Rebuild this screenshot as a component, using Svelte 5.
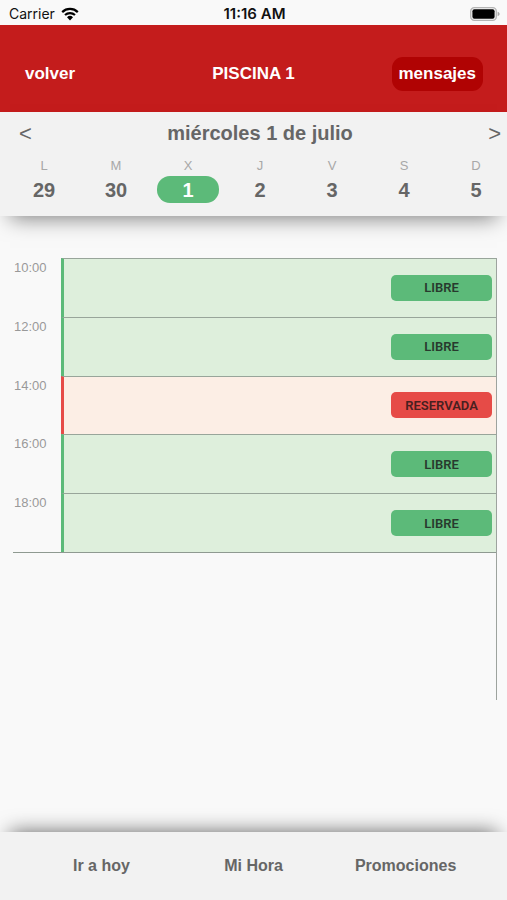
<script lang="ts">
  type Day = { letter: string; name: string; number: number };
  type Slot = { time: string; reserved: boolean };

  const days: Day[] = [
    { letter: "L", name: "lunes", number: 29 },
    { letter: "M", name: "martes", number: 30 },
    { letter: "X", name: "miércoles", number: 1 },
    { letter: "J", name: "jueves", number: 2 },
    { letter: "V", name: "viernes", number: 3 },
    { letter: "S", name: "sábado", number: 4 },
    { letter: "D", name: "domingo", number: 5 },
  ];

  const slots: Slot[] = [
    { time: "10:00", reserved: false },
    { time: "12:00", reserved: false },
    { time: "14:00", reserved: true },
    { time: "16:00", reserved: false },
    { time: "18:00", reserved: false },
  ];

  let selected = $state(1);
</script>

<div class="screen">
  <div class="status">
    <div class="carrier">
      Carrier
      <svg width="18" height="14" viewBox="0 0 18 14" aria-hidden="true">
        <path d="M1.2 5.1a11.2 11.2 0 0 1 15.6 0" fill="none" stroke="#000" stroke-width="2.2" />
        <path d="M4 8.1a7.2 7.2 0 0 1 10 0" fill="none" stroke="#000" stroke-width="2.1" />
        <path d="M9 13.4 6 10.3a4.3 4.3 0 0 1 6 0z" fill="#000" />
      </svg>
    </div>
    <div class="clock">11:16 AM</div>
    <svg class="battery" width="30" height="14" viewBox="0 0 30 14" aria-hidden="true">
      <rect x="0.7" y="0.7" width="25.6" height="12.6" rx="3.6" fill="#f4f4f4" stroke="#b4b4b4" stroke-width="1.3" />
      <rect x="2.4" y="2.3" width="22.2" height="9.4" rx="2" fill="#000" />
      <path d="M27.6 4.8c1.2.4 2 1.2 2 2.2s-.8 1.8-2 2.2z" fill="#a9a9a9" />
    </svg>
  </div>

  <header class="topbar">
    <div><button class="back" type="button">volver</button></div>
    <h1>PISCINA 1</h1>
    <div class="end"><button class="messages" type="button">mensajes</button></div>
  </header>

  <section class="calendar">
    <div class="date-row">
      <button type="button" aria-label="Semana anterior">&lt;</button>
      <h2>miércoles 1 de julio</h2>
      <button type="button" aria-label="Semana siguiente">&gt;</button>
    </div>
    <div class="days">
      {#each days as day}
        <button class="day" class:active={day.number === selected} type="button" aria-label="{day.name} {day.number}" aria-pressed={day.number === selected} onclick={() => (selected = day.number)}>
          <span class="letter">{day.letter}</span>
          <span class="number">{day.number}</span>
        </button>
      {/each}
    </div>
  </section>

  <main>
    <div class="agenda">
      <table>
        <tbody>
          {#each slots as slot}
            <tr class:reserved={slot.reserved}>
              <th scope="row">{slot.time}</th>
              <td><button type="button">{slot.reserved ? "RESERVADA" : "LIBRE"}</button></td>
            </tr>
          {/each}
        </tbody>
      </table>
    </div>
  </main>

  <nav class="tabs">
    <button type="button">Ir a hoy</button>
    <button type="button">Mi Hora</button>
    <button type="button">Promociones</button>
  </nav>
</div>

<style>
  :global(*) { box-sizing: border-box; }
  :global(body) { margin: 0; background: #f9f9f9; font-family: "Liberation Sans", Arial, sans-serif; }
  button { border: 0; padding: 0; color: inherit; background: none; font: inherit; cursor: pointer; }

  .screen { display: flex; flex-direction: column; min-height: 100vh; color: #666666; background: #f9f9f9; overflow-x: hidden; }

  .status { display: grid; grid-template-columns: 1fr auto 1fr; align-items: center; height: 25px; padding: 2px 7px 0 9px; color: #111111; font-family: Inter, sans-serif; font-size: 14px; }
  .carrier { display: flex; align-items: center; gap: 6px; }
  .clock { font-size: 15px; font-weight: 600; }
  .battery { justify-self: end; }

  .topbar { display: grid; grid-template-columns: 1fr auto 1fr; align-items: center; height: 87px; padding: 10px 24px 0; color: #ffffff; background: #c41c1c; font-size: 17px; font-weight: 700; }
  .topbar h1 { margin: 0; font-size: 17px; }
  .back { padding-left: 1px; }
  .end { text-align: right; }
  .messages { height: 34px; padding: 0 7px; border-radius: 11px; background: #b00303; }

  .calendar { position: relative; height: 104px; background: #f2f2f2; box-shadow: 0 12px 20px -10px rgba(0, 0, 0, 0.5); }
  .date-row { display: flex; align-items: center; justify-content: space-between; height: 43px; padding: 0 6px 0 19px; }
  .date-row h2 { margin: 0; font-size: 20px; font-weight: 700; }
  .date-row button { font-size: 22px; line-height: 26px; }
  .days { display: grid; grid-template-columns: repeat(7, 1fr); margin: 0 -5px 0 8px; }
  .day { display: flex; flex-direction: column; align-items: center; }
  .letter { color: #a8a8a8; font-size: 13px; line-height: 21px; }
  .number { width: 62px; padding-top: 1px; border-radius: 13px; font-size: 20px; font-weight: 700; line-height: 26px; }
  .active .number { color: #ffffff; background: #5cba79; }

  main { flex: 1; padding: 42px 10px 0 13px; }
  .agenda { height: 442px; border-right: 1px solid #9da39e; }
  table { width: 100%; height: 295px; border-spacing: 0; border-bottom: 1px solid #8f9a91; }
  th { width: 48px; padding: 0 0 0 1px; color: #999999; font-size: 13px; font-weight: 400; line-height: 19px; text-align: left; vertical-align: top; }
  td { padding: 0 4px 0 0; border-top: 1px solid #98a59a; border-left: 3px solid #5cba79; background: #deefdc; text-align: right; vertical-align: middle; }
  td button { width: 101px; height: 26px; border-radius: 5px; color: #283a2e; background: #5cba79; font-family: Roboto, sans-serif; font-size: 13px; font-weight: 600; text-align: center; }
  .reserved td { border-left-color: #e64b47; background: #fceee5; }
  .reserved td button { color: #48201f; background: #e64b47; }

  .tabs { position: relative; display: grid; grid-template-columns: repeat(3, 1fr); height: 68px; padding: 0 5%; background: #f2f2f2; font-size: 16px; font-weight: 700; box-shadow: 0 -10px 20px -10px rgba(0, 0, 0, 0.6); }
</style>
